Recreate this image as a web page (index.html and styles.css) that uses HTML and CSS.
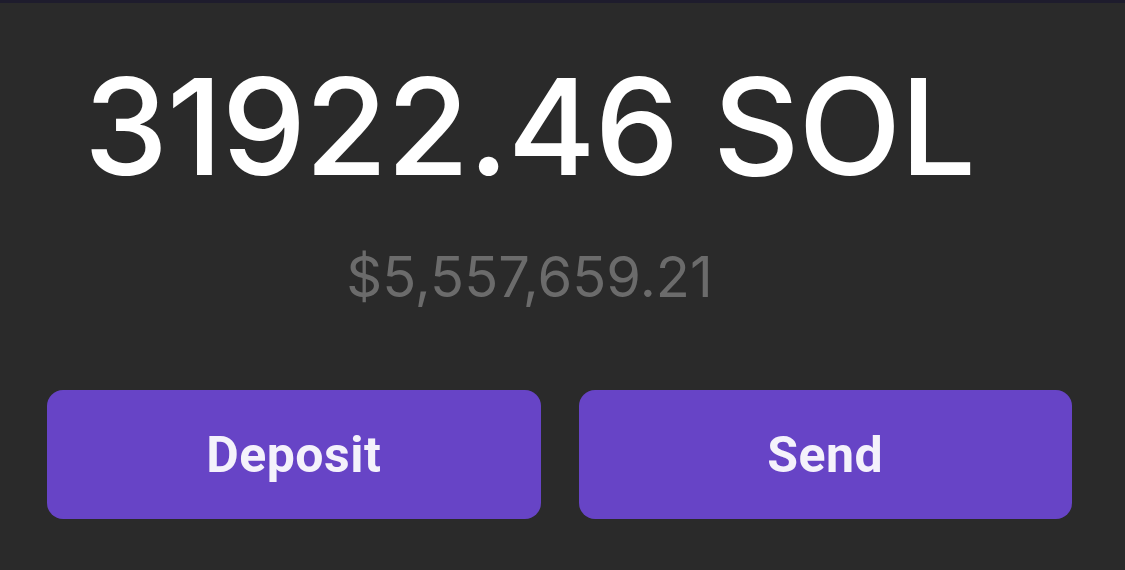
FILE: index.html
```html
<!DOCTYPE html>
<html lang="en">
<head>
  <meta charset="UTF-8">
  <meta name="viewport" content="width=device-width, initial-scale=1.0">
  <title>Wallet | Balance</title>
  <link rel="stylesheet" href="styles.css">
</head>
<body>
  <!-- Balance Section -->
  <section class="balance">
    <div class="balance-amount">
      <h1 class="balance-sol">31922.46 SOL</h1>
      <p class="balance-usd">$5,557,659.21</p>
    </div>

    <div class="balance-actions">
      <button class="action-button">Deposit</button>
      <button class="action-button">Send</button>
    </div>
  </section>
</body>
</html>
```

FILE: styles.css
```css
/* Global Styles */
* {
  box-sizing: border-box;
  margin: 0;
  padding: 0;
}

body {
  font-family: Inter, "Noto Sans", sans-serif;
  background-color: #2a2a2a;
  border-top: 3px solid #1e1c2d;
  height: 570px;
  overflow: hidden;
}

/* Balance Section */
.balance {
  display: flex;
  flex-direction: column;
  padding: 0 53px 0 47px;
}

.balance-amount {
  display: flex;
  flex-direction: column;
  align-items: center;
  padding-right: 60px;
}

.balance-sol {
  color: #fff;
  font-size: 134px;
  font-weight: 500;
  line-height: 1;
  margin-top: 56px;
  letter-spacing: -1px;
}

.balance-usd {
  color: #6b6b6b;
  font-size: 56px;
  line-height: 1;
  margin-top: 56px;
}

/* Action Buttons */
.balance-actions {
  display: flex;
  gap: 38px;
  margin-top: 85px;
}

.action-button {
  flex: 1;
  height: 129px;
  background-color: #6744c6;
  color: #f4f2fb;
  border: none;
  border-radius: 16px;
  font-family: Roboto, "Liberation Sans", sans-serif;
  font-size: 50px;
  font-weight: 700;
  letter-spacing: 0.5px;
  cursor: pointer;
}
```
